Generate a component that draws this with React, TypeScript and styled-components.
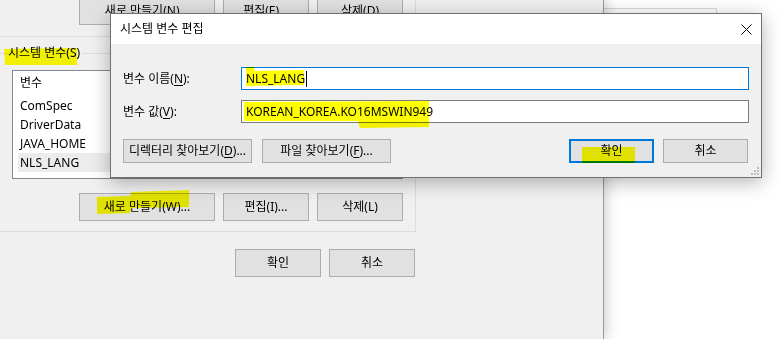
import React from "react";
import styled, { createGlobalStyle, css } from "styled-components";

const Global = createGlobalStyle`
  html, body { margin: 0; padding: 0; background: #ffffff; }
  body {
    font-family: "Noto Sans", "Noto Sans CJK KR", sans-serif;
    font-size: 12px;
    color: #000000;
  }
  #root { width: 781px; height: 339px; }
`;

const Desktop = styled.div`
  position: relative;
  width: 781px;
  height: 339px;
  overflow: hidden;
  background: #ffffff;
  isolation: isolate;
`;

const GhostFrame = styled.div`
  position: absolute;
  left: 603px;
  top: 8px;
  width: 113px;
  height: 60px;
  border: 1px solid #dadada;
  border-left: none;
`;

const BackWindow = styled.div`
  position: absolute;
  left: 0;
  top: 0;
  width: 604px;
  height: 339px;
  box-sizing: border-box;
  background: #f0f0f0;
  border-right: 1px solid #9b9b9b;
  box-shadow: 3px 0 12px rgba(0, 0, 0, 0.18);
  display: flex;
  flex-direction: column;
`;

const UserGroupTail = styled.div`
  margin: -3px 0 0 -1px;
  width: 417px;
  box-sizing: border-box;
  border: 1px solid #dcdcdc;
  border-top: none;
  padding: 0 12px 11px 0;
  display: flex;
  justify-content: flex-end;
  gap: 8px;
`;

const GroupBox = styled.fieldset`
  margin: 8px 0 0 -1px;
  width: 417px;
  min-width: 0;
  box-sizing: border-box;
  border: 1px solid #dcdcdc;
  padding: 0 12px 10px 8px;
`;

const GroupLegend = styled.legend`
  padding: 0 2px 0 0;
  line-height: 16px;
  white-space: nowrap;
`;

const ListBox = styled.div`
  margin: 9px 0 0 4px;
  height: 109px;
  box-sizing: border-box;
  border: 1px solid #828790;
  background: #ffffff;
  overflow: hidden;
`;

const ListHeader = styled.div`
  height: 25px;
  line-height: 24px;
  padding-left: 7px;
`;

const ListItem = styled.div<{ $selected?: boolean }>`
  height: 19px;
  line-height: 19px;
  margin-left: 5px;
  padding-left: 2px;
  background: ${(p) => (p.$selected ? "#ececec" : "transparent")};
`;

const GroupButtons = styled.div`
  margin-top: 14px;
  display: flex;
  justify-content: flex-end;
  gap: 8px;
`;

const FooterRow = styled.div`
  margin-top: 17px;
  width: 415px;
  display: flex;
  justify-content: flex-end;
  gap: 8px;
`;

const Button = styled.button<{ $w: number; $h: number; $default?: boolean }>`
  width: ${(p) => p.$w}px;
  height: ${(p) => p.$h}px;
  box-sizing: border-box;
  flex: none;
  padding: 0;
  margin: 0;
  background: #e1e1e1;
  border: 1px solid #adadad;
  border-radius: 0;
  font-family: inherit;
  font-size: 12px;
  color: #000000;
  white-space: nowrap;
  line-height: 16px;
  ${(p) =>
    p.$default &&
    css`
      border-color: #0078d7;
      box-shadow: inset 0 0 0 1px #0078d7;
    `}
`;

const Dialog = styled.div`
  position: absolute;
  left: 110px;
  top: 13px;
  width: 652px;
  height: 165px;
  box-sizing: border-box;
  border: 1px solid #707070;
  background: #f0f0f0;
  box-shadow: 0 4px 18px rgba(0, 0, 0, 0.3);
  display: flex;
  flex-direction: column;
`;

const TitleBar = styled.div`
  height: 30px;
  flex: none;
  background: #ffffff;
  display: flex;
  align-items: center;
  justify-content: space-between;
  padding-left: 9px;
`;

const Title = styled.span`
  line-height: 16px;
`;

const CloseBox = styled.div`
  width: 30px;
  height: 30px;
  display: flex;
  align-items: center;
  justify-content: center;
`;

const DialogBody = styled.div`
  flex: 1;
  padding: 23px 12px 0 12px;
  display: flex;
  flex-direction: column;
`;

const FieldGrid = styled.div`
  display: grid;
  grid-template-columns: 118px 1fr;
  row-gap: 10px;
  align-items: center;
`;

const FieldLabel = styled.div`
  line-height: 16px;
  white-space: nowrap;
`;

const Key = styled.span`
  text-decoration: underline;
  text-underline-offset: 2px;
`;

const TextField = styled.div<{ $focused?: boolean }>`
  height: 23px;
  box-sizing: border-box;
  border: 1px solid ${(p) => (p.$focused ? "#0078d7" : "#7a7a7a")};
  background: #ffffff;
  padding: 0 4px;
  display: flex;
  align-items: center;
  line-height: 16px;
  white-space: nowrap;
`;

const Caret = styled.span`
  display: inline-block;
  width: 1px;
  height: 16px;
  background: #000000;
  margin-left: 1px;
`;

const DialogButtons = styled.div`
  margin-top: 16px;
  padding-right: 1px;
  display: flex;
  justify-content: space-between;
`;

const ButtonGroup = styled.div<{ $gap: number }>`
  display: flex;
  gap: ${(p) => p.$gap}px;
`;

const Grip = styled.svg`
  position: absolute;
  right: 2px;
  bottom: 1px;
`;

const MarkerLayer = styled.svg`
  position: absolute;
  left: 0;
  top: 0;
  pointer-events: none;
  mix-blend-mode: multiply;
`;

const highlights = [
  "4,49 77,48 77,65 5,65",
  "246,67 254,67 255,71 304,70 304,85 246,86",
  "244,102 429,101 429,127 360,128 358,121 244,121",
  "582,147 635,147 635,163 582,163",
  "97,197 130,196 131,192 189,190 189,207 131,208 130,213 97,214",
];

export default function App() {
  return (
    <>
      <Global />
      <Desktop>
        <GhostFrame />
        <BackWindow>
          <UserGroupTail>
            <Button $w={136} $h={28}>새로 만들기(N)...</Button>
            <Button $w={86} $h={28}>편집(E)...</Button>
            <Button $w={86} $h={28}>삭제(D)</Button>
          </UserGroupTail>
          <GroupBox>
            <GroupLegend>시스템 변수(S)</GroupLegend>
            <ListBox>
              <ListHeader>변수</ListHeader>
              <ListItem>ComSpec</ListItem>
              <ListItem>DriverData</ListItem>
              <ListItem>JAVA_HOME</ListItem>
              <ListItem $selected>NLS_LANG</ListItem>
            </ListBox>
            <GroupButtons>
              <Button $w={136} $h={28}>새로 만들기(W)...</Button>
              <Button $w={86} $h={28}>편집(I)...</Button>
              <Button $w={86} $h={28}>삭제(L)</Button>
            </GroupButtons>
          </GroupBox>
          <FooterRow>
            <Button $w={86} $h={28}>확인</Button>
            <Button $w={86} $h={28}>취소</Button>
          </FooterRow>
        </BackWindow>

        <Dialog>
          <TitleBar>
            <Title>시스템 변수 편집</Title>
            <CloseBox>
              <svg width="11" height="11" viewBox="0 0 11 11">
                <path d="M0.5 0.5 L10.5 10.5 M10.5 0.5 L0.5 10.5" stroke="#000" strokeWidth="1" fill="none" />
              </svg>
            </CloseBox>
          </TitleBar>
          <DialogBody>
            <FieldGrid>
              <FieldLabel>
                변수 이름(<Key>N</Key>):
              </FieldLabel>
              <TextField $focused>
                NLS_LANG
                <Caret />
              </TextField>
              <FieldLabel>
                변수 값(<Key>V</Key>):
              </FieldLabel>
              <TextField>KOREAN_KOREA.KO16MSWIN949</TextField>
            </FieldGrid>
            <DialogButtons>
              <ButtonGroup $gap={10}>
                <Button $w={129} $h={24}>
                  디렉터리 찾아보기(<Key>D</Key>)...
                </Button>
                <Button $w={129} $h={24}>
                  파일 찾아보기(<Key>F</Key>)...
                </Button>
              </ButtonGroup>
              <ButtonGroup $gap={9}>
                <Button $w={85} $h={24} $default>
                  확인
                </Button>
                <Button $w={85} $h={24}>
                  취소
                </Button>
              </ButtonGroup>
            </DialogButtons>
          </DialogBody>
          <Grip width="9" height="9" viewBox="0 0 9 9">
            <g fill="#bdbdbd">
              <rect x="7" y="0" width="2" height="2" />
              <rect x="4" y="3" width="2" height="2" />
              <rect x="7" y="3" width="2" height="2" />
              <rect x="1" y="6" width="2" height="2" />
              <rect x="4" y="6" width="2" height="2" />
              <rect x="7" y="6" width="2" height="2" />
            </g>
          </Grip>
        </Dialog>

        <MarkerLayer width="781" height="339" viewBox="0 0 781 339">
          {highlights.map((pts, i) => (
            <polygon key={i} points={pts} fill="#ffff00" />
          ))}
        </MarkerLayer>
      </Desktop>
    </>
  );
}
